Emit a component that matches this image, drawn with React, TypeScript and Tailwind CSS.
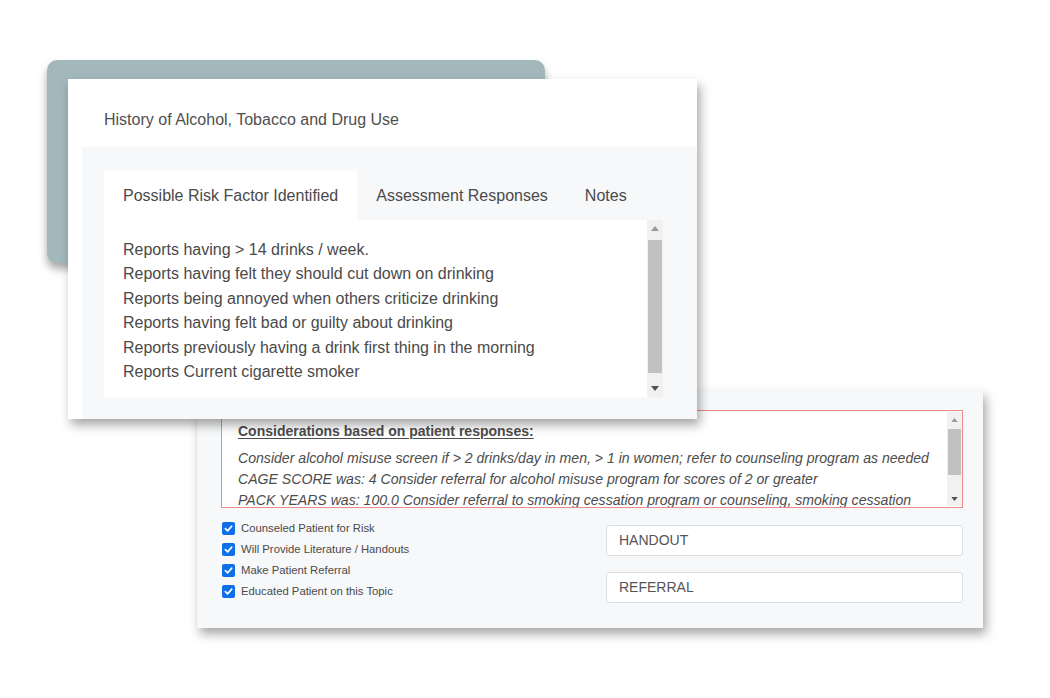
import React from 'react';

const risks = [
  'Reports having > 14 drinks / week.',
  'Reports having felt they should cut down on drinking',
  'Reports being annoyed when others criticize drinking',
  'Reports having felt bad or guilty about drinking',
  'Reports previously having a drink first thing in the morning',
  'Reports Current cigarette smoker',
];

const considerations = [
  'Consider alcohol misuse screen if > 2 drinks/day in men, > 1 in women; refer to counseling program as needed',
  'CAGE SCORE was: 4 Consider referral for alcohol misuse program for scores of 2 or greater',
  'PACK YEARS was: 100.0 Consider referral to smoking cessation program or counseling, smoking cessation',
];

const checks = [
  'Counseled Patient for Risk',
  'Will Provide Literature / Handouts',
  'Make Patient Referral',
  'Educated Patient on this Topic',
];

const Scrollbar = ({ thumbTop, thumbHeight }: { thumbTop: string; thumbHeight: string }) => (
  <div className="relative w-[16px] shrink-0 bg-[#f1f1f1]">
    <svg className="absolute left-[4px] top-[6px]" width="8" height="5" viewBox="0 0 8 5">
      <path d="M0 5 L4 0 L8 5 Z" fill="#9a9a9a" />
    </svg>
    <div className={`absolute left-[1px] right-[1px] bg-[#c1c1c1] ${thumbTop} ${thumbHeight}`} />
    <svg className="absolute left-[4px] bottom-[6px]" width="8" height="5" viewBox="0 0 8 5">
      <path d="M0 0 L8 0 L4 5 Z" fill="#505050" />
    </svg>
  </div>
);

const CheckBox = () => (
  <span className="flex h-[13px] w-[13px] items-center justify-center rounded-[2px] bg-[#0f6fe8]">
    <svg width="9" height="9" viewBox="0 0 10 10">
      <path d="M1.5 5.2 L4 7.6 L8.6 2.4" fill="none" stroke="#fff" strokeWidth="1.8" strokeLinecap="round" strokeLinejoin="round" />
    </svg>
  </span>
);

export default function App() {
  return (
    <div className="relative h-[698px] w-[1050px] overflow-hidden bg-white" style={{ fontFamily: '"Liberation Sans", Arial, sans-serif' }}>
      {/* back panel */}
      <div className="absolute left-[47px] top-[60px] h-[203px] w-[498px] rounded-[10px] bg-[#a3b8bc] shadow-[0_6px_8px_rgba(0,0,0,0.35)]" />

      {/* lower card */}
      <div className="absolute left-[197px] top-[390px] flex h-[238px] w-[786px] flex-col bg-[#f7f8f9] pl-[24px] pr-[20px] pt-[20px] shadow-[3px_6px_10px_rgba(0,0,0,0.35)]">
        <div className="flex h-[98px] border border-[#e98d8d] bg-white">
          <div className="flex-1 overflow-hidden pl-[16px] pt-[11px] text-[#4c4c4c]">
            <div className="text-[14px] font-bold underline underline-offset-2 leading-[18px]">Considerations based on patient responses:</div>
            <div className="mt-[8px] text-[14.1px] italic leading-[21px]">
              {considerations.map((c) => (
                <div key={c} className="whitespace-nowrap">{c}</div>
              ))}
            </div>
          </div>
          <div className="relative my-[1px] w-[15px] shrink-0 bg-[#f1f1f1]">
            <svg className="absolute left-[4px] top-[6px]" width="7" height="4" viewBox="0 0 8 5">
              <path d="M0 5 L4 0 L8 5 Z" fill="#9a9a9a" />
            </svg>
            <div className="absolute left-[1px] right-[1px] top-[17px] h-[46px] bg-[#c1c1c1]" />
            <svg className="absolute bottom-[5px] left-[4px]" width="7" height="4" viewBox="0 0 8 5">
              <path d="M0 0 L8 0 L4 5 Z" fill="#505050" />
            </svg>
          </div>
        </div>
        <div className="mt-[13px] flex justify-between">
          <div className="flex flex-col gap-[8px] pl-[1px] pt-[1px]">
            {checks.map((c) => (
              <div key={c} className="flex items-center gap-[6px] text-[11.3px] leading-[13px] text-[#4a4a4a]">
                <CheckBox />
                <span>{c}</span>
              </div>
            ))}
          </div>
          <div className="flex w-[357px] flex-col gap-[16px] pt-[4px]">
            <div className="flex h-[31px] items-center rounded-[3px] border border-[#dcdfe2] bg-white px-[12px] text-[14px] text-[#555]">HANDOUT</div>
            <div className="flex h-[31px] items-center rounded-[3px] border border-[#dcdfe2] bg-white px-[12px] text-[14px] text-[#555]">REFERRAL</div>
          </div>
        </div>
      </div>

      {/* main card */}
      <div className="absolute left-[68px] top-[79px] flex h-[340px] w-[629px] flex-col bg-white pl-[14px] pt-[14px] shadow-[3px_6px_10px_rgba(0,0,0,0.35)]">
        <div className="flex h-[54px] items-center bg-white pl-[22px] text-[16px] text-[#505050] shadow-[0_0_2px_rgba(0,0,0,0.04)]">
          History of Alcohol, Tobacco and Drug Use
        </div>
        <div className="flex flex-1 flex-col bg-[#f7f8f9] pl-[22px] pt-[24px]">
          <div className="flex h-[49px] text-[16px] text-[#4a4a4a]">
            <div className="flex items-center bg-white px-[19px]">Possible Risk Factor Identified</div>
            <div className="flex items-center px-[19px]">Assessment Responses</div>
            <div className="flex items-center px-[18px]">Notes</div>
          </div>
          <div className="flex h-[177px] w-[559px] bg-white">
            <div className="flex-1 pl-[19px] pt-[18px] text-[16px] leading-[24.4px] text-[#4a4a4a]">
              {risks.map((r) => (
                <div key={r}>{r}</div>
              ))}
            </div>
            <Scrollbar thumbTop="top-[20px]" thumbHeight="h-[133px]" />
          </div>
        </div>
      </div>
    </div>
  );
}
